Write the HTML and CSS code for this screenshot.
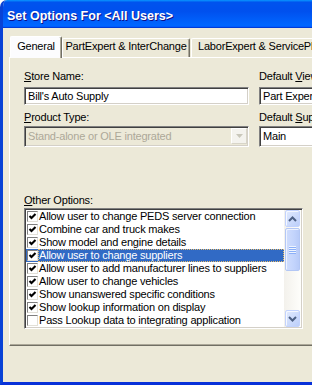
FILE: index.html
```html
<!DOCTYPE html>
<html lang="en">
<head>
  <meta charset="UTF-8" />
  <title>Set Options For &lt;All Users&gt;</title>
  <link rel="stylesheet" href="styles.css">
</head>
<body>
  <div class="window">
    <div class="titlebar">Set Options For &lt;All Users&gt;</div>

    <div class="client">
      <div class="tabs">
        <div class="tab active">General</div>
        <div class="tab tab-wide">PartExpert &amp; InterChange</div>
        <div class="tab tab-last">LaborExpert &amp; ServicePlus</div>
      </div>

      <div class="panel">
        <div class="fields">
          <div class="field">
            <label><u>S</u>tore Name:</label>
            <div class="edit">Bill's Auto Supply</div>
          </div>
          <div class="field">
            <label>Default <u>V</u>iew:</label>
            <div class="edit">Part Expert</div>
          </div>
          <div class="field field-2">
            <label><u>P</u>roduct Type:</label>
            <div class="combo disabled">
              <span class="combo-text">Stand-alone or OLE integrated</span>
              <span class="drop-btn">
                <svg width="7" height="4" viewBox="0 0 7 4"><path d="M0 0H7L3.5 4Z" fill="#c9c7ba"/></svg>
              </span>
            </div>
          </div>
          <div class="field field-2">
            <label>Default <u>S</u>upplier:</label>
            <div class="combo">
              <span class="combo-text">Main</span>
            </div>
          </div>
        </div>

        <label class="options-label"><u>O</u>ther Options:</label>
        <div class="listbox">
          <div class="items">
            <div class="row"><span class="cb"><svg viewBox="0 0 9 9"><polyline points="1.5,4 3.5,6 7.5,2"/></svg></span><span class="txt">Allow user to change PEDS server connection</span></div>
            <div class="row"><span class="cb"><svg viewBox="0 0 9 9"><polyline points="1.5,4 3.5,6 7.5,2"/></svg></span><span class="txt">Combine car and truck makes</span></div>
            <div class="row"><span class="cb"><svg viewBox="0 0 9 9"><polyline points="1.5,4 3.5,6 7.5,2"/></svg></span><span class="txt">Show model and engine details</span></div>
            <div class="row selected"><span class="cb"><svg viewBox="0 0 9 9"><polyline points="1.5,4 3.5,6 7.5,2"/></svg></span><span class="txt">Allow user to change suppliers</span></div>
            <div class="row"><span class="cb"><svg viewBox="0 0 9 9"><polyline points="1.5,4 3.5,6 7.5,2"/></svg></span><span class="txt">Allow user to add manufacturer lines to suppliers</span></div>
            <div class="row"><span class="cb"><svg viewBox="0 0 9 9"><polyline points="1.5,4 3.5,6 7.5,2"/></svg></span><span class="txt">Allow user to change vehicles</span></div>
            <div class="row"><span class="cb"><svg viewBox="0 0 9 9"><polyline points="1.5,4 3.5,6 7.5,2"/></svg></span><span class="txt">Show unanswered specific conditions</span></div>
            <div class="row"><span class="cb"><svg viewBox="0 0 9 9"><polyline points="1.5,4 3.5,6 7.5,2"/></svg></span><span class="txt">Show lookup information on display</span></div>
            <div class="row"><span class="cb"></span><span class="txt">Pass Lookup data to integrating application</span></div>
          </div>

          <div class="vscroll">
            <div class="sbtn">
              <svg width="9" height="6" viewBox="0 0 9 6"><polyline points="1,5 4.5,1.5 8,5" fill="none" stroke="#4d6185" stroke-width="2"/></svg>
            </div>
            <div class="thumb"><span class="grip"></span></div>
            <div class="track"></div>
            <div class="sbtn">
              <svg width="9" height="6" viewBox="0 0 9 6"><polyline points="1,1 4.5,4.5 8,1" fill="none" stroke="#4d6185" stroke-width="2"/></svg>
            </div>
          </div>
        </div>
      </div>
    </div>
  </div>
</body>
</html>
```

FILE: styles.css
```css
* {
  box-sizing: border-box;
}

body {
  margin: 0;
  width: 312px;
  height: 385px;
  overflow: hidden;
  background: #fff;
  font-family: "Liberation Sans", Arial, sans-serif;
  font-size: 11px;
  letter-spacing: -0.2px;
  color: #000;
}

.window {
  width: 480px;
  height: 385px;
  display: flex;
  flex-direction: column;
  border-left: 3px solid #0842d6;
  border-bottom: 3px solid #0831d9;
  border-top-left-radius: 7px;
  background: #ece9d8;
  overflow: hidden;
}

.titlebar {
  height: 28px;
  padding: 8px 0 0 4px;
  line-height: 17px;
  font-size: 12.5px;
  font-weight: bold;
  letter-spacing: 0;
  color: #fff;
  text-shadow: 1px 1px #0f1089;
  background: linear-gradient(to bottom, #0997ff, #0053ee 8%, #0050ee 40%, #0066ff 88%, #0066ff 93%, #005bff 95%, #003dd7 96%, #003dd7);
}

.client {
  flex: 1;
  padding: 8px 0 0 6px;
}

/* tab strip */
.tabs {
  display: flex;
  align-items: flex-end;
  height: 22px;
  padding-left: 1px;
}

.tab {
  height: 19px;
  margin-bottom: 1px;
  padding: 1px 6px 0;
  line-height: 13px;
  text-align: center;
  white-space: nowrap;
  border-top: 1px solid #fff;
  border-left: 1px solid #fff;
  border-right: 1px solid #716f64;
  box-shadow: inset -1px 0 #aca899;
  border-radius: 2px 2px 0 0;
}

.tab.active {
  position: relative;
  z-index: 1;
  width: 52px;
  height: 22px;
  margin-bottom: 0;
  padding-top: 3px;
  background: #fcfcfe;
}

.tab-wide {
  width: 128px;
  padding: 1px 0 0;
}

.tab-last {
  margin-left: 1px;
}

/* page of the tab control */
.panel {
  height: 289px;
  margin-top: -1px;
  padding: 12px 0 0 14px;
  border-top: 1px solid #fff;
  border-left: 1px solid #fff;
  border-bottom: 1px solid #716f64;
  box-shadow: inset 0 -1px #aca899;
}

label {
  display: block;
  line-height: 13px;
  white-space: nowrap;
}

.fields {
  display: grid;
  grid-template-columns: 225px 160px;
  column-gap: 10px;
  row-gap: 6px;
}

.edit,
.combo,
.listbox {
  border: 1px solid;
  border-color: #808080 #fff #fff #808080;
  box-shadow: inset 1px 1px #404040, inset -1px -1px #d4d0c8;
}

.edit {
  height: 18px;
  margin-top: 4px;
  padding: 1px 0 0 3px;
  line-height: 14px;
  white-space: nowrap;
  background: #fff;
}

.combo {
  display: flex;
  height: 21px;
  margin-top: 2px;
  padding: 1px 1px 2px 3px;
  background: #fff;
}

.combo-text {
  flex: 1;
  line-height: 17px;
  white-space: nowrap;
}

.combo.disabled {
  background: #ece9d8;
  color: #aca899;
}

.drop-btn {
  display: flex;
  align-items: center;
  justify-content: center;
  width: 16px;
  border: 1px solid #fff;
  border-right-color: #d8d5c8;
  border-bottom-color: #d8d5c8;
  background: #f4f3ee;
}

.options-label {
  margin-top: 47px;
}

/* check list */
.listbox {
  display: flex;
  width: 279px;
  height: 121px;
  margin-top: 1px;
  padding: 1px;
  background: #fff;
}

.items {
  flex: 1;
}

.row {
  display: flex;
  align-items: center;
  height: 13px;
  white-space: nowrap;
}

.cb {
  width: 11px;
  height: 11px;
  margin-left: 1px;
  border: 1px solid;
  border-color: #7f7f7f #e2e0d8 #e2e0d8 #7f7f7f;
  background: #fff;
}

.cb svg {
  display: block;
  width: 9px;
  height: 9px;
  fill: none;
  stroke: #000;
  stroke-width: 2.1;
}

.txt {
  flex: 1;
  padding-left: 1px;
  line-height: 13px;
}

.row.selected {
  background: #316ac5;
  color: #fff;
}

.row.selected .txt {
  outline: 1px dotted #e8bd6c;
  outline-offset: -1px;
}

.vscroll {
  display: flex;
  flex-direction: column;
  width: 17px;
  background: linear-gradient(to right, #f3f1ec, #fefefb);
}

.sbtn {
  display: flex;
  align-items: center;
  justify-content: center;
  height: 17px;
  margin: 0 1px;
  border: 1px solid #c3d3fd;
  border-radius: 2px;
  background: linear-gradient(135deg, #e1eafe, #bccffa);
  box-shadow: inset 1px 1px #f5f8ff;
}

.thumb {
  display: flex;
  align-items: center;
  justify-content: center;
  height: 43px;
  margin: 1px 1px 0;
  border: 1px solid #b3c7f5;
  border-radius: 2px;
  background: linear-gradient(to right, #d0ddfd, #c3d4fc 60%, #b8cbf8);
  box-shadow: inset 1px 1px #eef3ff;
}

.grip {
  width: 7px;
  height: 8px;
  background: repeating-linear-gradient(to bottom, #eef4fe 0 1px, #8cb0f8 1px 2px);
}

.track {
  flex: 1;
}
```
